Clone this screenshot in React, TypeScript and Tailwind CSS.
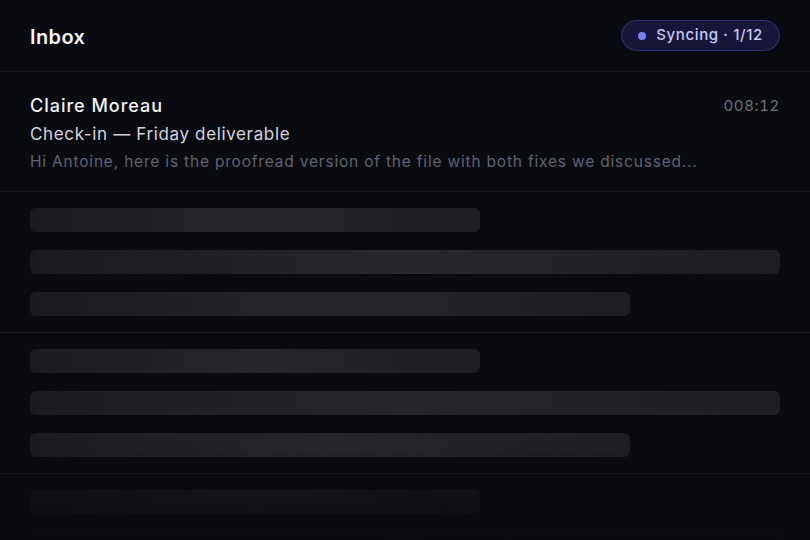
import React from "react";

const skeletonRows = [0, 1, 2];

function SkeletonBar({ width }: { width: string }) {
  return (
    <div
      className={`h-6 rounded-md bg-gradient-to-r from-[#1a1a23] via-[#26262f] to-[#1d1d26] ${width}`}
    />
  );
}

export default function App() {
  return (
    <div
      className="relative h-[540px] w-[810px] overflow-hidden bg-[#0a0a11] tracking-[0.04em] text-white"
      style={{ fontFamily: "Inter, 'Noto Sans', sans-serif" }}
    >
      {/* Header */}
      <div className="flex h-[72px] items-center justify-between border-b border-[#1a1a23] px-[30px]">
        <h1 className="pt-[2px] text-[20px] font-semibold tracking-[0.02em] text-[#f4f4f7]">Inbox</h1>
        <div className="flex h-[31px] items-center gap-[10px] rounded-full border border-[#34347a] bg-[#16163a] pl-[16px] pr-[16px]">
          <span className="h-2 w-2 rounded-full bg-[#7b7ff7]" />
          <span className="text-[15px] font-medium text-[#c8c9f4]">Syncing · 1/12</span>
        </div>
      </div>

      {/* Loaded message */}
      <div className="border-b border-[#1a1a23] px-[30px] pb-[18px] pt-[22px]">
        <div className="flex items-center justify-between">
          <span className="text-[18px] font-medium leading-[24px] tracking-[0.055em] text-[#f1f1f4]">
            Claire Moreau
          </span>
          <span className="text-[15px] leading-[24px] tabular-nums text-[#6b6e7b]">008:12</span>
        </div>
        <p className="mt-[4px] text-[17px] leading-[24px] text-[#d3d4db]">Check-in — Friday deliverable</p>
        <p className="mt-[5px] text-[15.5px] leading-[22px] tracking-[0.052em] text-[#5f6270]">
          Hi Antoine, here is the proofread version of the file with both fixes we discussed...
        </p>
      </div>

      {/* Skeleton rows */}
      {skeletonRows.map((i) => (
        <div key={i} className="flex flex-col gap-[18px] border-b border-[#1a1a23] px-[30px] py-4">
          <SkeletonBar width="w-[450px]" />
          <SkeletonBar width="w-full" />
          <SkeletonBar width="w-[600px]" />
        </div>
      ))}

      {/* bottom fade */}
      <div className="pointer-events-none absolute inset-x-0 bottom-0 h-[90px] bg-gradient-to-b from-transparent via-[#0a0a11]/70 to-[#0a0a11]" />
    </div>
  );
}
